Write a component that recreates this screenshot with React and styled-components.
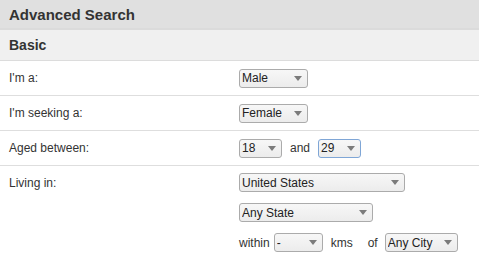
import styled, { createGlobalStyle } from 'styled-components';

const GlobalStyle = createGlobalStyle`
    body{
        margin: 0;
        background: #fff;
        font-family: "Liberation Sans", Arial, sans-serif;
    }
`

const SearchPanel = styled.div`
    width: 479px;
    height: 263px;
    overflow: hidden;
    color: #333;
`

const PanelHeader = styled.div`
    height: 28px;
    padding-left: 9px;
    display: flex;
    align-items: center;
    background: #e0e0e0;
    border-bottom: 2px solid #dbdbdb;
    font-size: 15px;
    font-weight: bold;
`

const SectionHeader = styled.div`
    height: 30px;
    padding-left: 9px;
    display: flex;
    align-items: center;
    background: #f0f0f0;
    border-bottom: 1px solid #dcdcdc;
    font-size: 14px;
    font-weight: bold;
`

const Row = styled.div`
    display: grid;
    grid-template-columns: 239px 1fr;
    min-height: 34px;
    border-bottom: ${p => p.last ? 'none' : '1px solid #dedede'};
    font-size: 12px;
`

const Label = styled.div`
    padding-left: 9px;
    display: flex;
    align-items: ${p => p.top ? 'flex-start' : 'center'};
    padding-top: ${p => p.top ? '10px' : '0'};
`

const Controls = styled.div`
    display: flex;
    flex-direction: ${p => p.stack ? 'column' : 'row'};
    align-items: ${p => p.stack ? 'flex-start' : 'center'};
    gap: ${p => p.stack ? '11px' : '8px'};
    padding-top: ${p => p.stack ? '7px' : '0'};
`

const Line = styled.div`
    display: flex;
    align-items: center;
`

const Word = styled.span`
    margin-left: ${p => p.ml || 0}px;
    margin-right: ${p => p.mr || 0}px;
`

const SelectWrap = styled.div`
    position: relative;
    width: ${p => p.w}px;
    height: 19px;

    select{
        appearance: none;
        -webkit-appearance: none;
        width: 100%;
        height: 100%;
        margin: 0;
        padding: 0 0 0 2px;
        border: 1px solid ${p => p.focus ? '#7fa6d6' : '#ababab'};
        border-radius: 3px;
        background: linear-gradient(#f7f7f7, #ececec);
        font-family: "Liberation Sans", Arial, sans-serif;
        font-size: 12px;
        color: #222;
        outline: none;
    }

    svg{
        position: absolute;
        right: 6px;
        top: 7px;
        pointer-events: none;
    }
`

const Dropdown = ({ w, value, focus }) => (
    <SelectWrap w={w} focus={focus}>
        <select defaultValue={value}>
            <option>{value}</option>
        </select>
        <svg width="8" height="5" viewBox="0 0 8 5">
            <path d="M0 0 H8 L4 5 Z" fill="#7b7b7b" />
        </svg>
    </SelectWrap>
)

const App = () => {
    return (
        <SearchPanel>
            <GlobalStyle />
            <PanelHeader>Advanced Search</PanelHeader>
            <SectionHeader>Basic</SectionHeader>

            <Row>
                <Label>I'm a:</Label>
                <Controls><Dropdown w={69} value="Male" /></Controls>
            </Row>
            <Row>
                <Label>I'm seeking a:</Label>
                <Controls><Dropdown w={69} value="Female" /></Controls>
            </Row>
            <Row>
                <Label>Aged between:</Label>
                <Controls>
                    <Dropdown w={43} value="18" />
                    <span>and</span>
                    <Dropdown w={43} value="29" focus />
                </Controls>
            </Row>
            <Row last>
                <Label top>Living in:</Label>
                <Controls stack>
                    <Dropdown w={166} value="United States" />
                    <Dropdown w={134} value="Any State" />
                    <Line>
                        <Word mr={4}>within</Word>
                        <Dropdown w={49} value="-" />
                        <Word ml={8} mr={15}>kms</Word>
                        <Word mr={7}>of</Word>
                        <Dropdown w={73} value="Any City" />
                    </Line>
                </Controls>
            </Row>
        </SearchPanel>
    )
}

export default App;
